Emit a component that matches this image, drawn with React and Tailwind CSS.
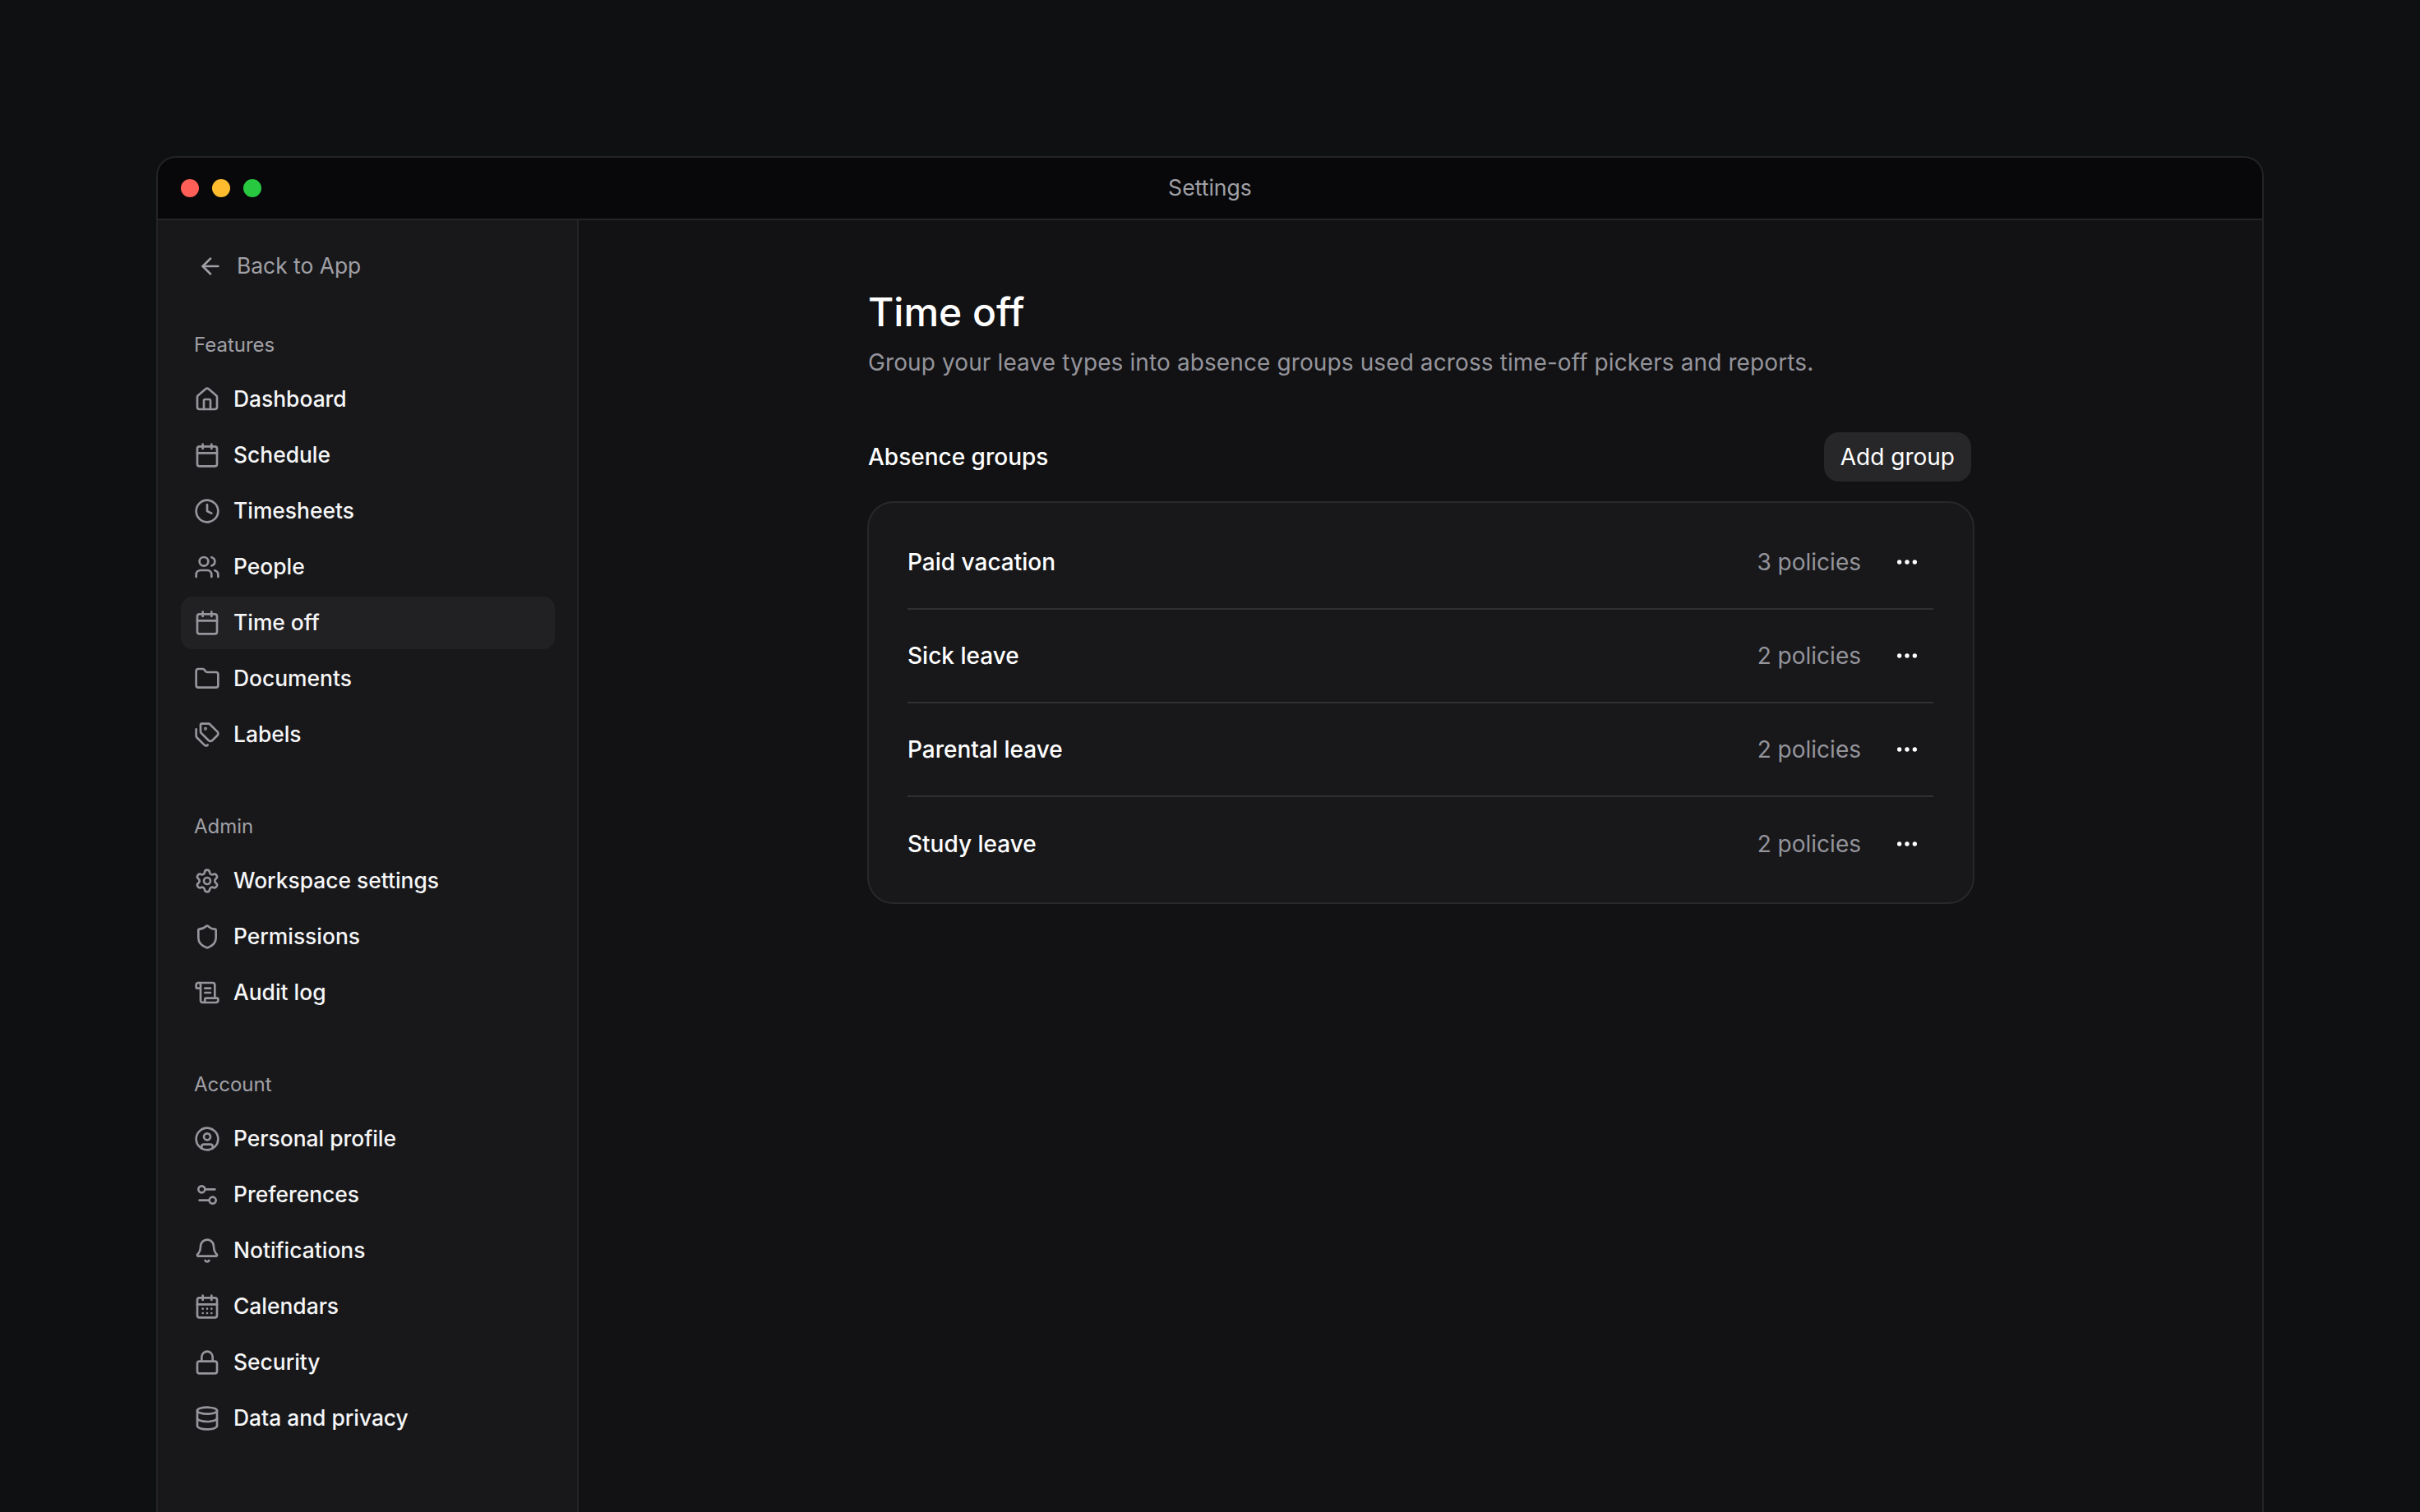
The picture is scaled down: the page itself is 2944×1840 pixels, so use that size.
import React from "react";
import { ArrowLeft, House, Calendar, Clock, Users, Folder, Tags, Settings, Shield, ScrollText, CircleUser, Settings2, Bell, CalendarDays, Lock, Database, Ellipsis } from "lucide-react";

const Item = ({ icon: I, label, active }) => (
  <div className={`flex items-center h-[64px] rounded-[14px] px-4 gap-4 text-[26.4px] font-[450] text-[#f6f6f7] ${active ? "bg-[#212124]" : ""}`}>
    <I className="text-[#95959c] shrink-0" strokeWidth={2} size={32} />
    <span>{label}</span>
  </div>
);
const groups = [
  ["Features", [[House,"Dashboard"],[Calendar,"Schedule"],[Clock,"Timesheets"],[Users,"People"],[Calendar,"Time off",true],[Folder,"Documents"],[Tags,"Labels"]]],
  ["Admin", [[Settings,"Workspace settings"],[Shield,"Permissions"],[ScrollText,"Audit log"]]],
  ["Account", [[CircleUser,"Personal profile"],[Settings2,"Preferences"],[Bell,"Notifications"],[CalendarDays,"Calendars"],[Lock,"Security"],[Database,"Data and privacy"]]],
];
const rows = [["Paid vacation","3 policies"],["Sick leave","2 policies"],["Parental leave","2 policies"],["Study leave","2 policies"]];

export default function App() {
  return (
    <div className="w-[2944px] h-[1840px] overflow-hidden bg-[#0f1012] pt-[190px] pl-[190px] font-['Inter',sans-serif]">
      <div className="w-[2564px] h-[1650px] rounded-t-[24px] border-2 border-[#242427] border-b-0 bg-[#121214] flex flex-col overflow-hidden">
        <div className="relative h-[76px] shrink-0 bg-[#08080a] border-b-2 border-[#242427] flex items-center justify-center text-[#a0a0a6] text-[26.6px]">
          <div className="absolute left-[28px] top-[26px] flex gap-[16px]">
            <span className="w-[22px] h-[22px] rounded-full bg-[#ff5f57]" />
            <span className="w-[22px] h-[22px] rounded-full bg-[#febc2e]" />
            <span className="w-[22px] h-[22px] rounded-full bg-[#28c840]" />
          </div>
          Settings
        </div>
        <div className="flex flex-1 min-h-0">
          <aside className="w-[512px] shrink-0 bg-[#18181b] border-r-2 border-[#242427] pl-[28px] pr-[27px] pt-[24px]">
            <div className="flex items-center h-[64px] px-5 gap-4 text-[26.4px] text-[#a0a0a6]"><ArrowLeft size={32} strokeWidth={2} />Back to App</div>
            <div className="flex flex-col gap-[60px] mt-[44px]">
              {groups.map(([t, items]) => (
                <div key={t}>
                  <div className="h-[40px] px-4 flex items-center text-[24px] text-[#a0a0a6] mb-[14px]">{t}</div>
                  <div className="flex flex-col gap-[4px]">{items.map(([I,l,a]) => <Item key={l} icon={I} label={l} active={a} />)}</div>
                </div>
              ))}
            </div>
          </aside>
          <main className="flex-1 pt-[80px] pl-[351px]">
            <div className="w-[1347px]">
              <h1 className="text-[48px] leading-[64px] pl-[1px] text-white font-medium">Time off</h1>
              <p className="text-[28px] leading-[40px] pl-[1px] tracking-[0.11px] text-[#94949b] mt-[9px]">Group your leave types into absence groups used across time-off pickers and reports.</p>
              <div className="flex items-center justify-between pl-[1px] mt-[65px] mb-[24px]">
                <span className="text-[28px] text-white font-[450]">Absence groups</span>
                <button className="h-[60px] px-5 mr-[4px] rounded-[18px] bg-[#27272a] text-white text-[28px]">Add group</button>
              </div>
              <div className="rounded-[32px] border-2 border-[#28282c] bg-[#18181b] pl-[47px] pr-[48px] pt-[16px] pb-[14px]">
                {rows.map(([n,p],i) => (
                  <div key={n} className={`h-[114px] flex items-center justify-between ${i<3 ? "border-b-2 border-[#303034]" : ""}`}>
                    <span className="text-[28px] text-white font-[450]">{n}</span>
                    <div className="flex items-center gap-[40px] text-[28px] text-[#94949b]">{p}<Ellipsis size={32} className="text-white mr-[16px]" /></div>
                  </div>
                ))}
              </div>
            </div>
          </main>
        </div>
      </div>
    </div>
  );
}
